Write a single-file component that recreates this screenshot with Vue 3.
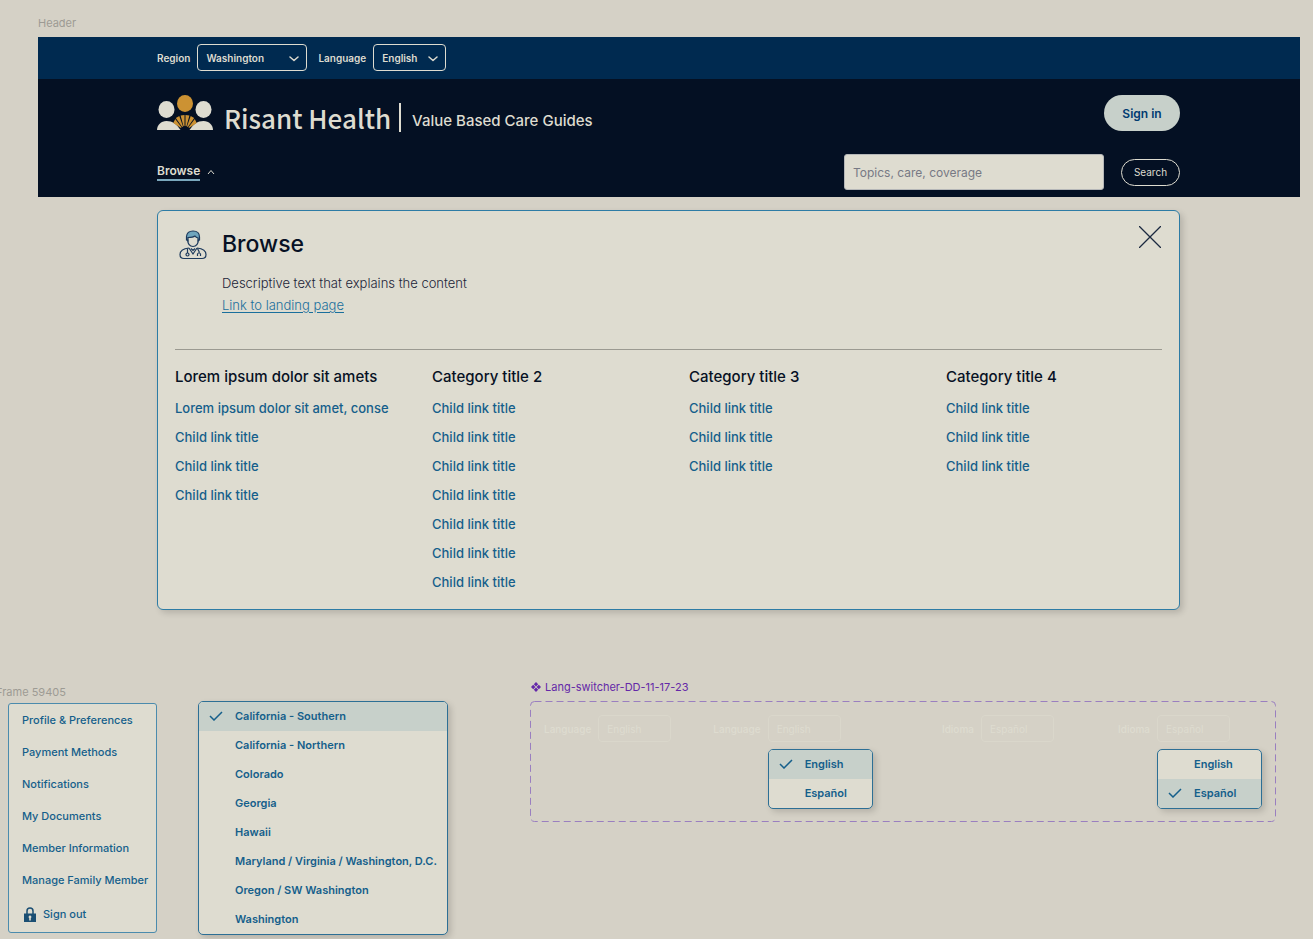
<script setup>
import { ref } from "vue";

const region = ref("Washington");
const language = ref("English");
const keyword = ref("");
const menuOpen = ref(true);

// mega menu columns
const categories = [
  {
    title: "Lorem ipsum dolor sit amets",
    links: ["Lorem ipsum dolor sit amet, conse", "Child link title", "Child link title", "Child link title"],
  },
  { title: "Category title 2", links: Array(7).fill("Child link title") },
  { title: "Category title 3", links: Array(3).fill("Child link title") },
  { title: "Category title 4", links: Array(3).fill("Child link title") },
];

const accountLinks = [
  "Profile & Preferences",
  "Payment Methods",
  "Notifications",
  "My Documents",
  "Member Information",
  "Manage Family Member",
];

const regions = [
  "California - Southern",
  "California - Northern",
  "Colorado",
  "Georgia",
  "Hawaii",
  "Maryland / Virginia / Washington, D.C.",
  "Oregon / SW Washington",
  "Washington",
];
const pickedRegion = ref("California - Southern");

// language switcher states, closed and open for each language
const languages = ["English", "Español"];
const switcherGroups = ref([
  {
    lang: "en",
    items: [
      { id: "en-closed", label: "Language", value: "English", open: false },
      { id: "en-open", label: "Language", value: "English", open: true },
    ],
  },
  {
    lang: "es",
    items: [
      { id: "es-closed", label: "Idioma", value: "Español", open: false },
      { id: "es-open", label: "Idioma", value: "Español", open: true },
    ],
  },
]);
</script>

<template>
  <div class="page">
    <p class="frame-label header-label">Header</p>
    <header class="header">
      <div class="top-bar">
        <div class="field">
          <label for="region">Region</label>
          <div class="select-wrap region">
            <select id="region" v-model="region">
              <option>Washington</option>
              <option>Colorado</option>
            </select>
            <svg class="chevron" viewBox="0 0 10 6"><path d="M1 1l4 3.500L9 1" /></svg>
          </div>
        </div>
        <div class="field">
          <label for="language">Language</label>
          <div class="select-wrap">
            <select id="language" v-model="language">
              <option v-for="l in languages" :key="l">{{ l }}</option>
            </select>
            <svg class="chevron" viewBox="0 0 10 6"><path d="M1 1l4 3.500L9 1" /></svg>
          </div>
        </div>
      </div>

      <div class="main-bar">
        <div class="bar-row">
          <a href="#" class="brand">
            <svg class="logo" viewBox="0 0 56 36" aria-hidden="true">
              <g fill="#dedcd0">
                <ellipse cx="9.500" cy="14.500" rx="8" ry="8.500" />
                <ellipse cx="46.500" cy="14.500" rx="8" ry="8.500" />
                <path d="M0 35c0-5 4-9 9.500-9 6 0 10 3 14 9z" />
                <path d="M56 35c0-5-4-9-9.500-9-6 0-10 3-14 9z" />
              </g>
              <g fill="#cc9233">
                <ellipse cx="28" cy="8.500" rx="8" ry="8.500" />
                <path d="M27.500 20v11l-1 .2-2.900-10.600z" />
                <path d="M28.500 20v11l1 .2 2.900-10.600z" />
                <path d="M22.300 21.100L26 31.400l-.9.500-6.300-8.800z" />
                <path d="M33.700 21.100L30 31.400l.9.500 6.300-8.800z" />
                <path d="M18.200 24l6.300 8.300-.6.800-7.600-5.100z" />
                <path d="M37.800 24l-6.300 8.300.6.800 7.600-5.100z" />
              </g>
            </svg>
            <span class="brand-name">Risant Health</span>
            <span class="brand-sub">Value Based Care Guides</span>
          </a>
          <button type="button" class="sign-in">Sign in</button>
        </div>
        <div class="bar-row">
          <button type="button" class="browse" :aria-expanded="menuOpen" @click="menuOpen = !menuOpen">
            <span>Browse</span>
            <svg viewBox="0 0 8 6"><path d="M1 5l3-3.500L7 5" /></svg>
          </button>
          <form class="search" @submit.prevent>
            <input v-model="keyword" type="text" aria-label="Topics, care, coverage" placeholder="Topics, care, coverage" />
            <button type="submit">Search</button>
          </form>
        </div>
      </div>
    </header>

    <section v-if="menuOpen" class="mega">
      <div class="mega-head">
        <svg class="doctor" viewBox="0 0 28 30" aria-hidden="true">
          <path class="hair" d="M7.500 10V6.500Q8 1 14 1q6.500 0 6.500 6V10l-1.500 1V8q-2-.5-3-2-2 1.500-7 1.500V11z" />
          <path d="M8.500 9.500Q9 16.500 14 16.500t5.500-7" />
          <path d="M10 18c-5 .5-9 2-9 6.500Q1 28.500 5 28.500h18q4 0 4-4c0-4.500-4-6-9-6.500" />
          <path d="M10 18l4 6 4-6M12 18.500l2 2 2-2M8.500 18.500V23M18.500 18.500l2 4" />
          <circle cx="8.500" cy="24.500" r="1.500" />
          <path d="M18.500 26v-2q1.500-2.500 3 0v2" />
        </svg>
        <div class="mega-text">
          <h2>Browse</h2>
          <p>Descriptive text that explains the content</p>
          <a href="#">Link to landing page</a>
        </div>
        <button type="button" class="close" aria-label="Close" @click="menuOpen = false">
          <svg viewBox="0 0 22 22"><path d="M0 0l22 22M22 0L0 22" /></svg>
        </button>
      </div>
      <div class="categories">
        <div v-for="c in categories" :key="c.title">
          <h3>{{ c.title }}</h3>
          <ul>
            <li v-for="(link, i) in c.links" :key="i"><a href="#">{{ link }}</a></li>
          </ul>
        </div>
      </div>
    </section>

    <div class="boards">
      <div class="account-board">
        <p class="frame-label account-label">Frame 59405</p>
        <ul class="account">
          <li v-for="a in accountLinks" :key="a"><a href="#">{{ a }}</a></li>
          <li class="sign-out">
            <svg viewBox="0 0 12 15" aria-hidden="true">
              <path class="shackle" d="M3 7V4q0-3 3-3t3 3v3" />
              <path d="M0 6.500h12V15H0z" />
              <path class="keyhole" d="M6 8.500a1.500 1.500 0 0 1 .8 2.700V13.500H5.200v-2.300A1.500 1.500 0 0 1 6 8.500z" />
            </svg>
            <a href="#">Sign out</a>
          </li>
        </ul>
      </div>

      <ul class="menu region-menu">
        <li v-for="r in regions" :key="r" :class="{ active: r === pickedRegion }">
          <button type="button" @click="pickedRegion = r">
            <svg v-if="r === pickedRegion" viewBox="0 0 14 10"><path d="M1 5l4 4 8-8" /></svg>
            <span>{{ r }}</span>
          </button>
        </li>
      </ul>

      <div class="switcher-board">
        <p class="component-label">
          <svg viewBox="0 0 10 10" aria-hidden="true">
            <path d="M5 0l2.200 2.200L5 4.400 2.800 2.200zM5 5.600l2.200 2.200L5 10 2.800 7.800zM2.200 2.800L4.400 5 2.200 7.200 0 5zM7.800 2.800L10 5 7.800 7.200 5.600 5z" />
          </svg>
          Lang-switcher-DD-11-17-23
        </p>
        <div class="switchers">
          <svg class="outline" aria-hidden="true"><rect x="0.5" y="0.5" rx="4" /></svg>
          <div v-for="g in switcherGroups" :key="g.lang" class="group" :class="g.lang">
            <div v-for="s in g.items" :key="s.id" class="field ghost">
              <label :for="s.id">{{ s.label }}</label>
              <div class="select-wrap">
                <select :id="s.id" v-model="s.value">
                  <option v-for="l in languages" :key="l">{{ l }}</option>
                </select>
                <ul v-if="s.open" class="menu lang-menu">
                  <li v-for="l in languages" :key="l" :class="{ active: l === s.value }">
                    <button type="button" @click="s.value = l">
                      <svg v-if="l === s.value" viewBox="0 0 14 10"><path d="M1 5l4 4 8-8" /></svg>
                      <span>{{ l }}</span>
                    </button>
                  </li>
                </ul>
              </div>
            </div>
          </div>
        </div>
      </div>
    </div>
  </div>
</template>

<style>
body {
  background: #d5d1c6;
}
</style>

<style scoped>
.page {
  padding-top: 15px;
  overflow: hidden;
  font-family: Inter, "Liberation Sans", sans-serif;
  font-size: 13px;
  color: #071124;
}
h2,
h3,
p,
ul {
  margin: 0;
  padding: 0;
}
ul {
  list-style: none;
}
button,
input,
select {
  font-family: inherit;
  cursor: pointer;
}
svg {
  display: block;
  fill: none;
}
a {
  color: #155f8b;
  text-decoration: none;
}
.frame-label {
  font-size: 11px;
  line-height: 16px;
  color: #9d9b94;
}
.header-label {
  margin: 0 0 6px 38px;
}

/* header */
.header {
  margin: 0 13px 0 38px;
}
.top-bar {
  display: flex;
  gap: 11px;
  padding: 7px 120px 8px 119px;
  background: #002a50;
}
.field {
  display: flex;
  align-items: center;
  gap: 7px;
  font-size: 10px;
  font-weight: 600;
  color: #dedcd0;
}
.select-wrap {
  position: relative;
  width: 73px;
}
.select-wrap.region {
  width: 110px;
}
select {
  display: block;
  width: 100%;
  height: 27px;
  padding: 0 8px;
  border: 1px solid #dedcd0;
  border-radius: 4px;
  background: transparent;
  color: inherit;
  font-size: 10px;
  font-weight: 600;
  appearance: none;
}
.chevron {
  position: absolute;
  top: 12px;
  right: 8px;
  width: 10px;
  height: 6px;
  stroke: #dedcd0;
  stroke-width: 1.5;
  stroke-linecap: round;
  stroke-linejoin: round;
  pointer-events: none;
}
.main-bar {
  display: flex;
  flex-direction: column;
  gap: 23px;
  padding: 16px 120px 7px 119px;
  background: #041023;
}
.bar-row {
  display: flex;
  align-items: center;
  justify-content: space-between;
  height: 36px;
}
.brand {
  display: flex;
  align-items: center;
  color: #dedcd0;
}
.logo {
  width: 56px;
  height: 36px;
}
.brand-name {
  margin: 8px 0 0 11px;
  padding-right: 8px;
  border-right: 2px solid #dedcd0;
  font-family: "Noto Sans CJK SC", sans-serif;
  font-size: 26px;
  font-weight: 500;
  line-height: 29px;
}
.brand-sub {
  padding: 16px 0 0 11px;
  font-size: 15px;
  font-weight: 500;
  line-height: 20px;
}
.sign-in {
  width: 76px;
  height: 36px;
  border: 0;
  border-radius: 18px;
  background: #c7d0ca;
  color: #003b71;
  font-size: 12px;
  font-weight: 600;
}
.browse {
  display: flex;
  align-items: center;
  gap: 7px;
  padding: 0;
  border: 0;
  background: none;
  color: #dedcd0;
  font-size: 12px;
  font-weight: 600;
}
.browse span {
  border-bottom: 2px solid #7aa7bc;
  line-height: 16px;
}
.browse svg {
  width: 8px;
  height: 6px;
  stroke: #dedcd0;
}
.search {
  display: flex;
  align-items: center;
  gap: 17px;
}
.search input {
  box-sizing: border-box;
  width: 260px;
  height: 36px;
  padding: 0 8px;
  border: 1px solid #b5b7b8;
  border-radius: 3px;
  background: #dedcd0;
  font-size: 12px;
}
.search input::placeholder {
  color: #777984;
}
.search button {
  width: 59px;
  height: 27px;
  padding: 0;
  border: 1px solid #dedcd0;
  border-radius: 14px;
  background: none;
  color: #dedcd0;
  font-size: 10px;
}

/* mega menu */
.mega {
  margin: 13px 133px 0 157px;
  padding: 17px 17px 12px;
  border: 1px solid #2d7ca5;
  border-radius: 6px;
  background: #dedcd0;
  box-shadow: 3px 3px 6px rgba(0, 0, 0, 0.15);
}
.mega-head {
  display: flex;
  align-items: flex-start;
  padding-bottom: 33px;
  border-bottom: 1px solid #9b9a91;
}
.doctor {
  width: 28px;
  height: 30px;
  margin: 2px 15px 0 4px;
  stroke: #1d3a5c;
  stroke-width: 1.2;
}
.doctor .hair {
  fill: #6fa5bd;
}
.mega-text {
  flex: 1;
  font-weight: 300;
  line-height: 22px;
}
h2 {
  margin-bottom: 12px;
  font-size: 23px;
  font-weight: 500;
  line-height: 32px;
}
.mega-text p {
  color: #1b2438;
}
.mega-text a {
  color: #1a6f9c;
  text-decoration: underline;
  text-underline-offset: 2px;
}
.close {
  margin: -2px 1px 0 0;
  padding: 0;
  border: 0;
  background: none;
}
.close svg {
  width: 22px;
  height: 22px;
  stroke: #1b2940;
  stroke-width: 1.3;
}
.categories {
  display: grid;
  grid-template-columns: repeat(4, 1fr);
  gap: 41px;
  padding-top: 15px;
}
h3 {
  margin-bottom: 5px;
  font-size: 15px;
  font-weight: 500;
  line-height: 24px;
  white-space: nowrap;
}
.categories li {
  font-weight: 500;
  line-height: 29px;
  white-space: nowrap;
}

/* lower boards */
.boards {
  display: flex;
  align-items: flex-start;
  padding: 69px 37px 4px 8px;
}
.account-board {
  width: 149px;
  margin: 5px 41px 0 0;
}
.account-label {
  margin: 0 0 3px -12px;
}
.account {
  border: 1px solid #4b8bad;
  border-radius: 3px;
  background: #dedcd0;
  font-size: 11px;
  font-weight: 500;
}
.account li {
  padding-left: 13px;
  line-height: 32px;
  white-space: nowrap;
}
.account .sign-out {
  display: flex;
  align-items: center;
  gap: 7px;
  padding-left: 15px;
  line-height: 36px;
}
.sign-out svg {
  width: 12px;
  height: 15px;
  fill: #1b4f73;
}
.sign-out .shackle {
  fill: none;
  stroke: #1b4f73;
  stroke-width: 1.5;
}
.sign-out .keyhole {
  fill: #dedcd0;
}
.menu {
  overflow: hidden;
  border: 1px solid #2d6f95;
  border-radius: 5px;
  background: #dedcd0;
  box-shadow: 3px 3px 6px rgba(0, 0, 0, 0.15);
}
.menu button {
  display: flex;
  align-items: center;
  justify-content: flex-end;
  width: 100%;
  height: 29px;
  padding: 0 0 2px;
  border: 0;
  background: none;
  color: #155f8b;
  font-size: 11px;
  font-weight: 600;
}
.menu span {
  flex: 1;
  margin-left: 36px;
  text-align: left;
  white-space: nowrap;
}
.menu svg {
  width: 14px;
  height: 10px;
  margin-left: 10px;
  stroke: #155f8b;
  stroke-width: 1.5;
}
.menu svg + span {
  margin-left: 12px;
}
.menu .active {
  background: #c7d0ca;
}
.region-menu {
  width: 248px;
  margin: 22px 82px 0 0;
}
.switcher-board {
  flex: 1;
}
.component-label {
  display: flex;
  align-items: center;
  gap: 4px;
  margin-bottom: 6px;
  font-size: 11px;
  line-height: 16px;
  color: #6428a8;
}
.component-label svg {
  width: 10px;
  height: 10px;
  margin-left: 1px;
  fill: #6428a8;
}
.switchers {
  position: relative;
  display: flex;
  justify-content: space-between;
  padding: 14px 46px 80px 14px;
}
.outline {
  position: absolute;
  inset: 0;
  width: 100%;
  height: 100%;
  stroke: #9a7fc0;
  stroke-dasharray: 7 4;
  pointer-events: none;
}
.outline rect {
  width: calc(100% - 1px);
  height: calc(100% - 1px);
}
.group {
  display: flex;
  gap: 42px;
}
.group.es {
  gap: 64px;
}
.ghost {
  color: #dedcd0;
}
.ghost label {
  font-weight: 500;
}
.ghost select {
  border-color: #dad7cb;
  font-weight: 400;
}
.lang-menu {
  position: absolute;
  top: 34px;
  left: 0;
  width: 103px;
}
</style>
